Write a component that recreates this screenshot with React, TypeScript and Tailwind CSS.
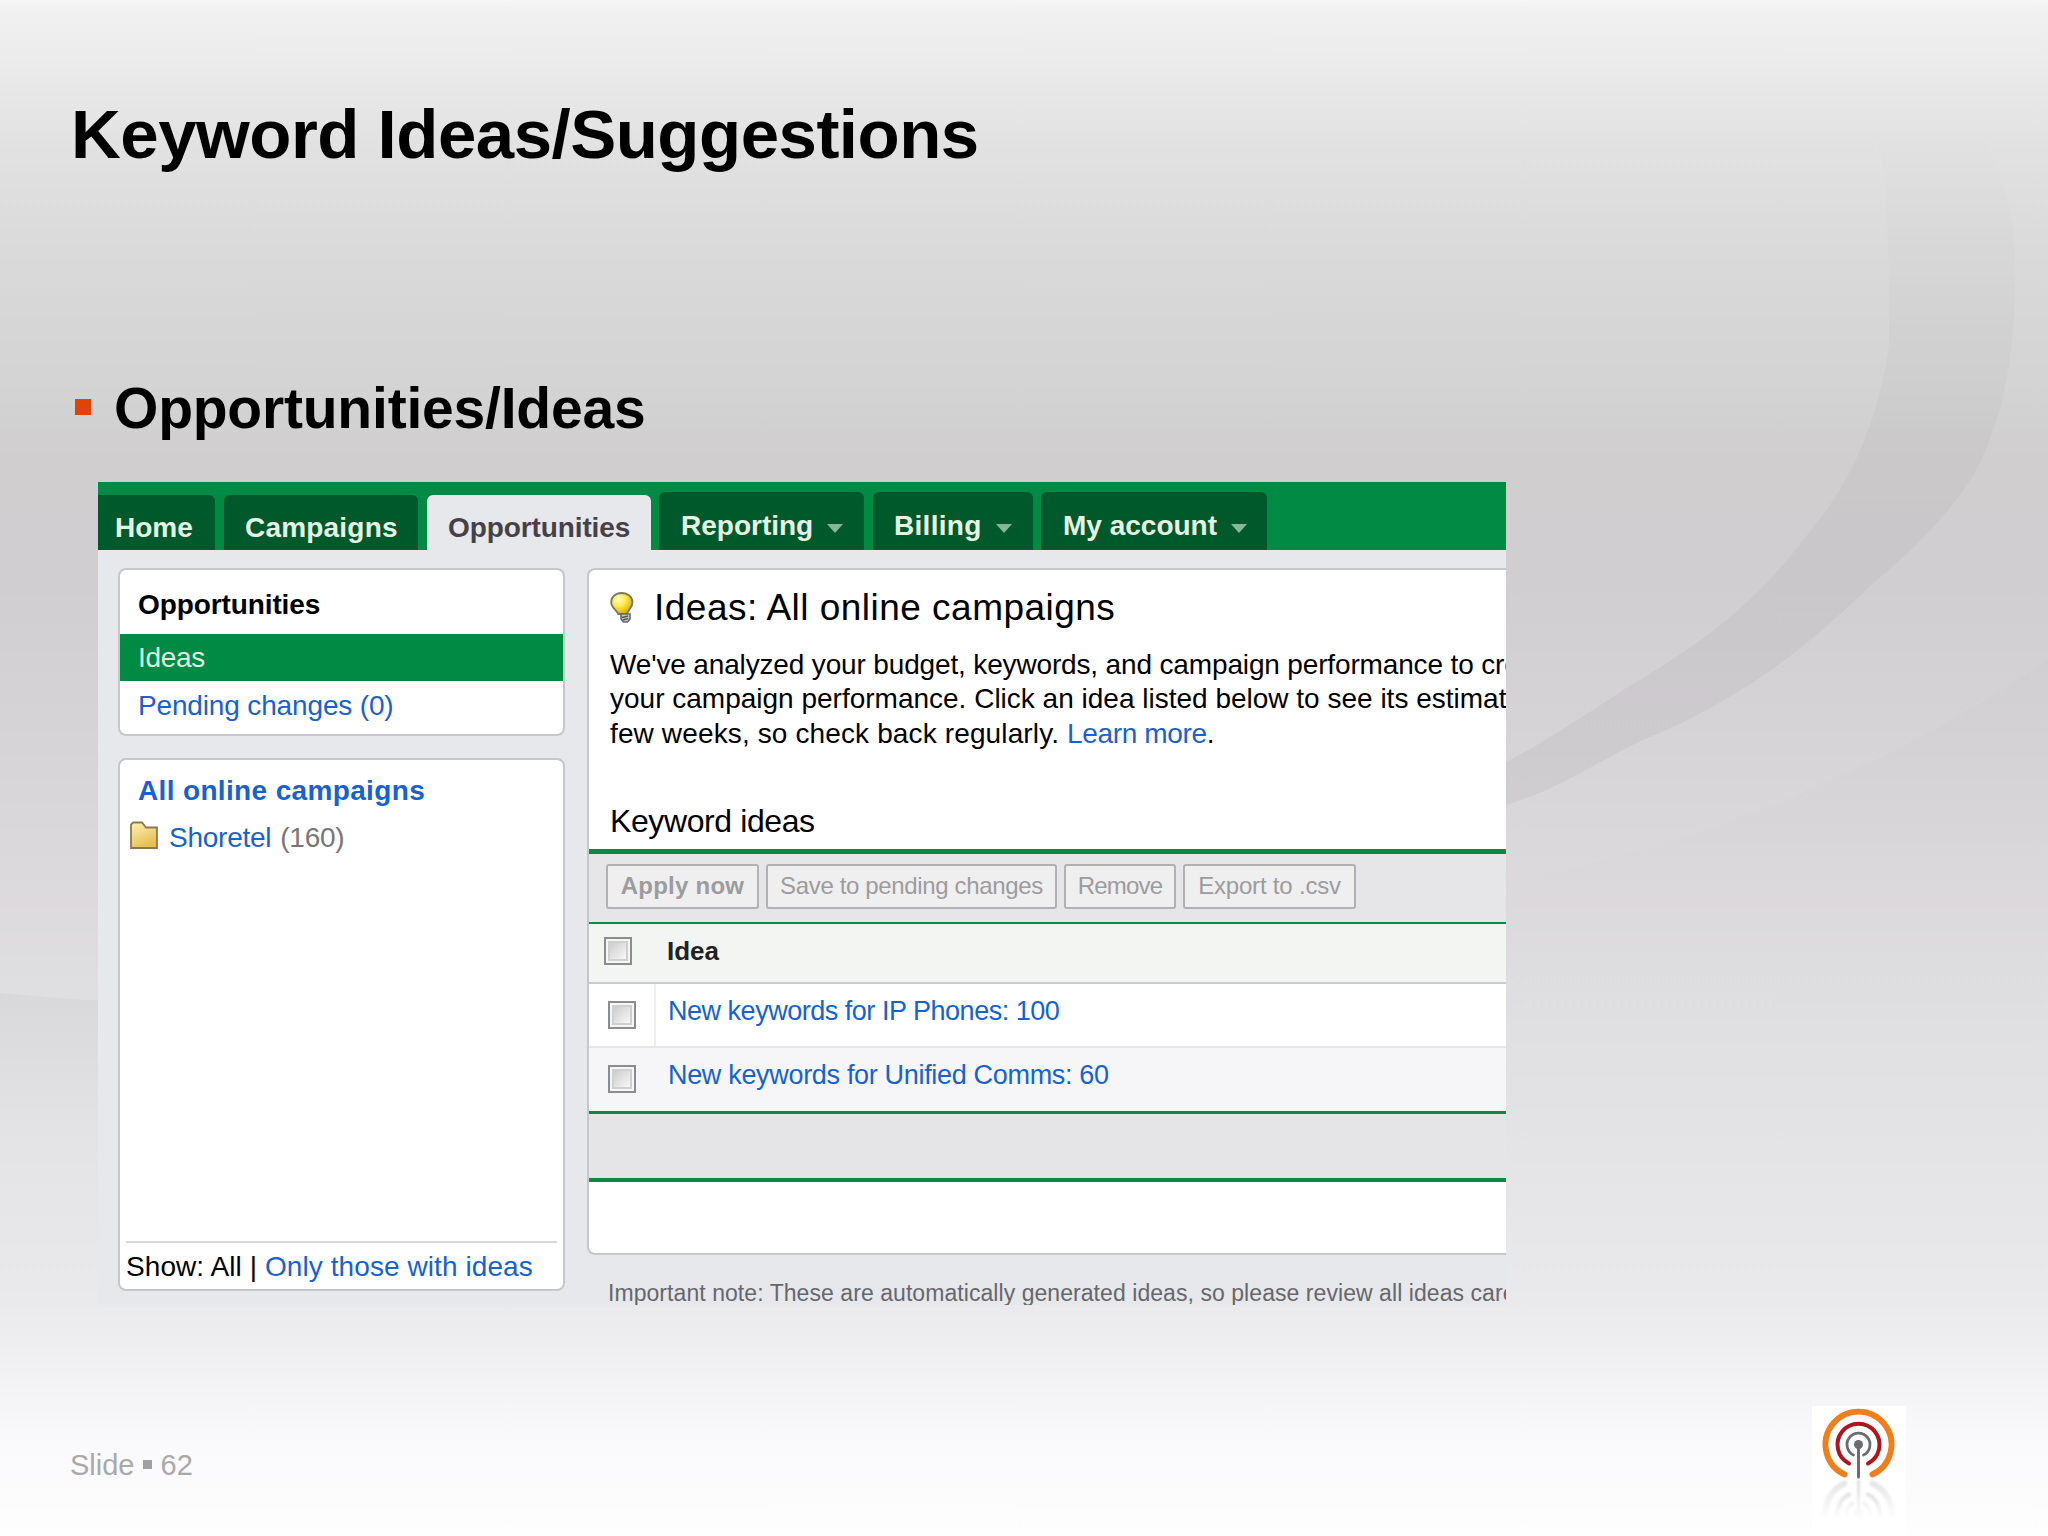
import { ReactNode } from 'react'

const link = 'text-[#1762cf]'

type TabProps = { label: string; className: string; menu?: boolean }

const Tab = ({ label, className, menu }: TabProps) => (
    <div className={`flex shrink-0 items-center rounded-t-[6px] text-[28px] ${className}`}>
        <span className='whitespace-nowrap font-bold'>{label}</span>
        {menu && <svg className='ml-[14px] mt-[4px]' width='16' height='9' viewBox='0 0 16 9'><path d='M0 0h16L8 9z' fill='#85b896' /></svg>}
    </div>
)

const Checkbox = () => (
    <div className='h-[28px] w-[28px] shrink-0 border-2 border-[#8b8c8e] bg-[#f6f6f6] p-[2px]'>
        <div className='h-full w-full border-2 border-[#cfcfd0] bg-gradient-to-br from-[#cdcdce] to-[#f8f8f8]' />
    </div>
)

const Button = ({ className, children }: { className: string; children: ReactNode }) => (
    <div className={`flex h-[45px] shrink-0 items-center justify-center whitespace-nowrap rounded-[3px] border-2 border-[#b1b1b2] bg-[#efeff0] text-[24px] text-[#9c9c9d] ${className}`}>{children}</div>
)

const Bulb = () => (
    <svg width='24' height='32' viewBox='0 0 24 32'>
        <defs>
            <radialGradient id='glow' cx='.35' cy='.3' r='.75'>
                <stop offset='0' stopColor='#fffbd0' />
                <stop offset='.45' stopColor='#ffe94a' />
                <stop offset='1' stopColor='#d9a800' />
            </radialGradient>
        </defs>
        <path d='M11.500 1C5.500 1 1.200 5 1.200 10.500c0 5 5 7 7 11.500H17c1.500-4.500 5.500-6.500 5.500-11.500C22.500 5 18 1 11.500 1z' fill='url(#glow)' stroke='#77756a' strokeWidth='1.800' />
        <path d='M11 22h9v5l-2.500 3h-4L11 27z' fill='#c9cacc' stroke='#68696b' strokeWidth='1.600' />
        <path d='M12 25.500l6-1.500M13 28l5-1.500' stroke='#55565a' strokeWidth='1.400' />
    </svg>
)

const Folder = () => (
    <svg className='mb-[4px]' width='28' height='29' viewBox='0 0 28 29'>
        <defs>
            <linearGradient id='folder' x1='0' y1='0' x2='.5' y2='1'>
                <stop offset='0' stopColor='#fdf3b5' />
                <stop offset='1' stopColor='#e8bd55' />
            </linearGradient>
        </defs>
        <path d='M1 27V3.500L3 1.500h9l4 5H27V27z' fill='url(#folder)' stroke='#8a7a4c' strokeWidth='1.800' />
    </svg>
)

const Arcs = () => (
    <g fill='none' strokeLinecap='round'>
        <path d='M64.600 94.500A33 33 0 1 1 92.400 94.500' stroke='#ef7f1a' strokeWidth='5.800' />
        <path d='M69 83.500A21 21 0 1 1 88 83.500' stroke='#b5121b' strokeWidth='4' />
        <path d='M73.500 75A11.500 11.500 0 1 1 83.500 75' stroke='#6c6d70' strokeWidth='2.800' />
        <path d='M78.500 64.500V97' stroke='#6c6d70' strokeWidth='3' />
        <circle cx='78.500' cy='64.500' r='4.500' fill='#6c6d70' />
    </g>
)

const Logo = () => (
    <svg width='94' height='130' viewBox='32 26 94 130'>
        <defs>
            <linearGradient id='fade' x1='0' y1='0' x2='0' y2='1'>
                <stop offset='0' stopColor='#fff' stopOpacity='.3' />
                <stop offset='1' stopColor='#fff' />
            </linearGradient>
        </defs>
        <rect x='32' y='26' width='94' height='130' fill='#fff' />
        <g transform='translate(0 198) scale(1 -1)' className='opacity-35 blur-[1px] grayscale'><Arcs /></g>
        <rect x='32' y='99' width='94' height='40' fill='url(#fade)' />
        <rect x='32' y='138' width='94' height='18' fill='#fff' />
        <Arcs />
    </svg>
)

const Backdrop = () => (
    <svg className='absolute inset-0 -z-10' width='2048' height='1536' viewBox='0 0 2048 1536'>
        <defs>
            <linearGradient id='sheet' x1='0' y1='0' x2='0' y2='1'>
                <stop offset='0' stopColor='#f6f6f6' />
                <stop offset='.007' stopColor='#f1f1f1' />
                <stop offset='.04' stopColor='#ebebeb' />
                <stop offset='.093' stopColor='#e2e2e2' />
                <stop offset='.153' stopColor='#dbdbdb' />
                <stop offset='.2' stopColor='#d7d7d7' />
                <stop offset='.26' stopColor='#d3d3d3' />
                <stop offset='.3' stopColor='#d0cecf' />
                <stop offset='.38' stopColor='#d0ced0' />
                <stop offset='.45' stopColor='#d4d2d4' />
                <stop offset='.55' stopColor='#dad8db' />
                <stop offset='.65' stopColor='#dfdee0' />
                <stop offset='.75' stopColor='#e4e3e5' />
                <stop offset='.85' stopColor='#eae9eb' />
                <stop offset='.89' stopColor='#f1f0f2' />
                <stop offset='.94' stopColor='#faf9fb' />
                <stop offset='1' stopColor='#fefefe' />
            </linearGradient>
            <linearGradient id='swoosh' x1='0' y1='0' x2='0' y2='1'>
                <stop offset='0' stopColor='#000' stopOpacity='0' />
                <stop offset='.35' stopColor='#000' stopOpacity='.025' />
                <stop offset='1' stopColor='#000' stopOpacity='.045' />
            </linearGradient>
            <linearGradient id='hill' x1='0' y1='0' x2='0' y2='1'>
                <stop offset='0' stopColor='#000' stopOpacity='.03' />
                <stop offset='1' stopColor='#000' stopOpacity='0' />
            </linearGradient>
        </defs>
        <rect width='2048' height='1536' fill='url(#sheet)' />
        <path d='M1870 120C1886 160 1889 200 1889 344C1882 400 1860 470 1817 522C1760 600 1712 637 1625 689C1590 712 1540 745 1500 765V806C1550 795 1600 760 1643 740C1730 705 1800 655 1871 585C1920 545 1975 490 1991 436C2014 380 2020 280 2012 218C2000 170 1990 140 1970 120z' fill='url(#swoosh)' />
        <path d='M2048 660C1900 760 1720 840 1500 885V1100H2048z' fill='url(#hill)' className='opacity-40' />
        <path d='M0 993C40 996 70 1000 110 1001V1130H0z' fill='url(#hill)' />
    </svg>
)

const App = () => {
    return (
        <div className="relative isolate flex h-[1536px] w-[2048px] flex-col overflow-hidden font-['Liberation_Sans',Arial,sans-serif] text-black">
            <Backdrop />
            <h1 className='ml-[71px] mt-[95px] h-[80px] text-[69px] font-bold leading-[80px] tracking-[-0.5px]'>Keyword Ideas/Suggestions</h1>
            <div className='ml-[75px] mt-[200px] flex h-[66px] items-center'>
                <div className='mb-[2px] h-[16px] w-[16px] bg-[#e04403]' />
                <h2 className='ml-[23px] text-[57px] font-bold leading-[66px] tracking-[-0.2px]'>Opportunities/Ideas</h2>
            </div>

            <div className='ml-[98px] mt-[41px] h-[823px] w-[1408px] overflow-hidden bg-[#e6e8ec]'>
                <div className='flex h-[68px] items-end bg-[#008a44] text-[#e5f3e5]'>
                    <Tab label='Home' className='h-[55px] w-[117px] rounded-tl-none bg-[#00592a] pl-[17px] pt-[11px]' />
                    <Tab label='Campaigns' className='ml-[9px] h-[55px] w-[194px] bg-[#00592a] pl-[21px] pt-[11px] tracking-[0.2px]' />
                    <Tab label='Opportunities' className='ml-[9px] h-[55px] w-[224px] bg-[#e6e8ec] pl-[21px] pt-[11px] tracking-[-0.1px] text-[#454149]' />
                    <Tab label='Reporting' menu className='ml-[8px] h-[58px] w-[205px] bg-[#00592a] pl-[22px] pt-[10px]' />
                    <Tab label='Billing' menu className='ml-[9px] h-[58px] w-[160px] bg-[#00592a] pl-[21px] pt-[10px] tracking-[0.3px]' />
                    <Tab label='My account' menu className='ml-[8px] h-[58px] w-[226px] bg-[#00592a] pl-[22px] pt-[10px]' />
                </div>

                <div className='flex'>
                    <div className='ml-[20px] mt-[18px] w-[447px] shrink-0 text-[28px]'>
                        <div className='flex h-[168px] flex-col rounded-[8px] border-2 border-[#c6c7ca] bg-white'>
                            <div className='h-[64px] pl-[18px] font-bold leading-[70px] tracking-[-0.1px]'>Opportunities</div>
                            <div className='h-[47px] bg-[#008a44] pl-[18px] leading-[48px] tracking-[-0.3px] text-[#dff3df]'>Ideas</div>
                            <div className={`pl-[18px] leading-[49px] tracking-[-0.15px] ${link}`}>Pending changes (0)</div>
                        </div>
                        <div className='mt-[22px] flex h-[533px] flex-col rounded-[8px] border-2 border-[#c6c7ca] bg-white'>
                            <div className={`h-[54px] whitespace-nowrap pl-[18px] font-bold leading-[62px] tracking-[0.35px] ${link}`}>All online campaigns</div>
                            <div className='flex h-[46px] items-center pl-[10px] tracking-[-0.25px]'>
                                <Folder />
                                <span className={`ml-[11px] mt-[2px] ${link}`}>Shoretel</span>
                                <span className='ml-[9px] mt-[2px] text-[#777]'>(160)</span>
                            </div>
                            <div className='mx-[6px] mt-auto h-[48px] whitespace-nowrap border-t-2 border-[#d7d7dc] leading-[48px] tracking-[0.08px]'>
                                Show: All | <span className={link}>Only those with ideas</span>
                            </div>
                        </div>
                    </div>

                    <div className='ml-[22px] mt-[18px] w-[919px] shrink-0'>
                        <div className='flex h-[687px] flex-col rounded-l-[8px] border-2 border-r-0 border-[#c6c7ca] bg-white'>
                            <div className='flex h-[76px] items-center pl-[21px]'>
                                <Bulb />
                                <span className='ml-[20px] whitespace-nowrap text-[37px] tracking-[0.48px]'>Ideas: All online campaigns</span>
                            </div>
                            <div className='h-[155px] whitespace-nowrap pl-[21px] pt-[2px] text-[28px] leading-[34.3px]'>
                                <div className='tracking-[-0.15px]'>We've analyzed your budget, keywords, and campaign performance to cre</div>
                                <div>your campaign performance. Click an idea listed below to see its estimat</div>
                                <div className='tracking-[0.13px]'>few weeks, so check back regularly. <span className={`tracking-[-0.35px] ${link}`}>Learn more</span>.</div>
                            </div>
                            <div className='h-[48px] pl-[21px] text-[32px] leading-[40px] tracking-[-0.4px]'>Keyword ideas</div>
                            <div className='flex h-[75px] items-center gap-[7px] border-b-2 border-t-[5px] border-[#0b8a47] bg-[#e6e5e7] pb-[4px] pl-[17px]'>
                                <Button className='w-[153px] font-bold tracking-[0.25px]'>Apply now</Button>
                                <Button className='w-[291px] tracking-[-0.35px]'>Save to pending changes</Button>
                                <Button className='w-[112px] tracking-[-0.8px]'>Remove</Button>
                                <Button className='w-[173px] tracking-[-0.2px]'>Export to .csv</Button>
                            </div>
                            <div className='flex h-[60px] items-center border-b-2 border-[#c8cacb] bg-[#f3f5f3] pb-[4px] pl-[15px]'>
                                <Checkbox />
                                <span className='ml-[35px] text-[26px] font-bold text-[#222]'>Idea</span>
                            </div>
                            <div className='flex h-[64px] border-b-2 border-[#e5e6ea] bg-white text-[27px]'>
                                <div className='flex w-[67px] items-center border-r-2 border-[#eeeef1] pl-[19px]'><Checkbox /></div>
                                <span className={`pl-[12px] leading-[54px] tracking-[-0.48px] ${link}`}>New keywords for IP Phones: 100</span>
                            </div>
                            <div className='flex h-[66px] border-b-[3px] border-[#0b8a47] bg-[#f6f6f9] text-[27px]'>
                                <div className='flex w-[67px] items-center pb-[2px] pl-[19px]'><Checkbox /></div>
                                <span className={`pl-[12px] leading-[54px] tracking-[-0.32px] ${link}`}>New keywords for Unified Comms: 60</span>
                            </div>
                            <div className='h-[68px] border-b-4 border-[#0b8a47] bg-[#e5e4e6]' />
                        </div>
                        <div className='whitespace-nowrap pl-[21px] pt-[22px] text-[23px] leading-[32px] tracking-[0.06px] text-[#66676b]'>Important note: These are automatically generated ideas, so please review all ideas care</div>
                    </div>
                </div>
            </div>

            <div className='absolute bottom-0 right-[142px]'><Logo /></div>
            <div className='ml-[70px] mt-[143px] flex items-center text-[29px] leading-[34px] text-[#a9a9ab]'>
                Slide<div className='mb-[2px] ml-[8px] mr-[9px] h-[9px] w-[9px] bg-[#a0a0a2]' />62
            </div>
        </div>
    )
}

export default App
